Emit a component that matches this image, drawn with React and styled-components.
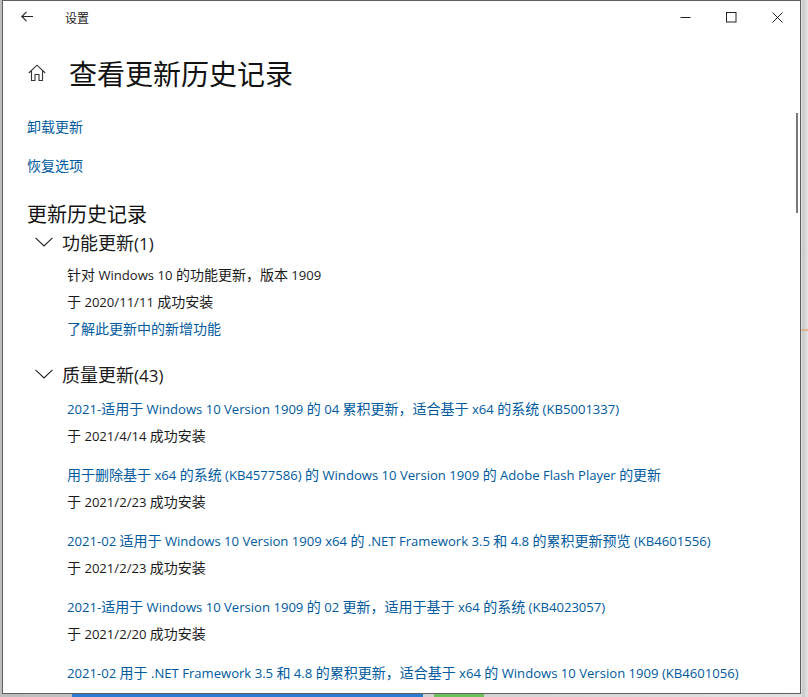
import React from 'react';
import styled, { createGlobalStyle } from 'styled-components';

const GlobalStyle = createGlobalStyle`
  html, body { margin: 0; padding: 0; height: 100%; background: #dcdcdc; overflow: hidden; }
  #root { height: 100%; }
`;

const font = `"Noto Sans CJK SC", "Noto Sans", sans-serif`;

const Desktop = styled.div`
  width: 808px;
  height: 697px;
  position: relative;
  overflow: hidden;
  background: linear-gradient(90deg, #bdbdbd 0, #e2e2e2 801px, #c9c9c9 803px, #e4e4e4 808px);
`;

const TaskStrip = styled.div`
  position: absolute;
  top: 694px;
  height: 3px;
  left: ${p => p.$left}px;
  width: ${p => p.$width}px;
  background: ${p => p.$color};
`;

const OrangeTick = styled.div`
  position: absolute;
  left: 801px;
  top: 329px;
  width: 7px;
  height: 2px;
  background: #e0b48e;
`;

const Window = styled.div`
  position: relative;
  width: 799px;
  height: 694px;
  box-sizing: border-box;
  margin-left: 2px;
  background: #fff;
  border: 1px solid #5f5f5f;
  overflow: hidden;
  font-family: ${font};
  color: #1a1a1a;
`;

const TitleBar = styled.div`
  display: flex;
  align-items: center;
  height: 32px;
  padding-left: 18px;
`;

const TitleText = styled.span`
  margin-left: 32px;
  font-size: 12px;
`;

const WindowControls = styled.div`
  display: flex;
  margin-left: auto;
`;

const ControlButton = styled.div`
  width: 46px;
  height: 32px;
  display: flex;
  align-items: center;
  justify-content: center;
`;

const Content = styled.div`
  padding: 0 0 0 24px;
`;

const PageHeader = styled.div`
  display: flex;
  align-items: center;
  height: 47px;
  margin-top: 16px;
`;

const HomeIcon = styled.div`
  display: flex;
  margin-left: 1px;
  width: 19px;
`;

const PageTitle = styled.h1`
  margin: 0 0 0 22px;
  font-size: 28px;
  font-weight: 400;
  color: #111;
`;

const TopLink = styled.a`
  display: block;
  color: #005a9e;
  font-size: 14px;
  line-height: 20px;
  margin-top: ${p => p.$top}px;
`;

const SectionTitle = styled.h2`
  margin: 25px 0 0;
  font-size: 20px;
  line-height: 28px;
  font-weight: 400;
  color: #111;
`;

const GroupHeader = styled.div`
  display: flex;
  align-items: center;
  height: 28px;
  margin-top: ${p => p.$top}px;
  padding-left: 8px;
`;

const GroupTitle = styled.span`
  margin-left: 9px;
  font-size: 18px;
  color: #1a1a1a;
`;

const GroupCount = styled.span`
  font-family: "Open Sans", sans-serif;
  font-size: 17px;
  line-height: 1;
`;

const Items = styled.div`
  padding-left: 40px;
`;

const Line = styled.div`
  font-size: 14px;
  line-height: 20px;
  height: 20px;
  white-space: nowrap;
  margin-top: ${p => p.$top || 0}px;
  color: ${p => (p.$link ? '#005a9e' : '#1a1a1a')};
`;

const Latin = styled.span`
  font-family: "Open Sans", sans-serif;
  font-size: 13.1px;
  line-height: 1;
`;

const ScrollThumb = styled.div`
  position: absolute;
  right: 2px;
  top: 112px;
  height: 100px;
  width: 2px;
  background: #7a7a7a;
`;

const Chevron = () => (
  <svg width="18" height="10" viewBox="0 0 18 10" fill="none" stroke="#222" strokeWidth="1.1">
    <path d="M0.5 0.8 L9 9 L17.5 0.8" />
  </svg>
);

// latin runs are set smaller than the chinese ones, like the system font does
const Mixed = ({ text }) =>
  text.split(/([\u3000-\u9fff\uff00-\uffef]+)/).map((part, i) =>
    i % 2 ? part : part && <Latin key={i}>{part}</Latin>
  );

const quality = [
  ['2021-适用于 Windows 10 Version 1909 的 04 累积更新，适合基于 x64 的系统 (KB5001337)', '于 2021/4/14 成功安装'],
  ['用于删除基于 x64 的系统 (KB4577586) 的 Windows 10 Version 1909 的 Adobe Flash Player 的更新', '于 2021/2/23 成功安装'],
  ['2021-02 适用于 Windows 10 Version 1909 x64 的 .NET Framework 3.5 和 4.8 的累积更新预览 (KB4601556)', '于 2021/2/23 成功安装'],
  ['2021-适用于 Windows 10 Version 1909 的 02 更新，适用于基于 x64 的系统 (KB4023057)', '于 2021/2/20 成功安装'],
  ['2021-02 用于 .NET Framework 3.5 和 4.8 的累积更新，适合基于 x64 的 Windows 10 Version 1909 (KB4601056)'],
];

export default function App() {
  return (
    <Desktop>
      <GlobalStyle />
      <Window>
        <TitleBar>
          <svg width="12" height="12" viewBox="0 0 12 12" fill="none" stroke="#222" strokeWidth="1.1">
            <path d="M5.5 0.8 L0.8 5.5 L5.5 10.2 M0.8 5.5 H12" />
          </svg>
          <TitleText>设置</TitleText>
          <WindowControls>
            <ControlButton>
              <svg width="11" height="11" viewBox="0 0 11 11" stroke="#222" strokeWidth="1"><path d="M0.5 5.5 H10.5" /></svg>
            </ControlButton>
            <ControlButton>
              <svg width="11" height="11" viewBox="0 0 11 11" fill="none" stroke="#222" strokeWidth="1"><rect x="0.5" y="0.5" width="9.5" height="9.5" /></svg>
            </ControlButton>
            <ControlButton>
              <svg width="11" height="11" viewBox="0 0 11 11" stroke="#222" strokeWidth="1"><path d="M0.5 0.5 L10.5 10.5 M10.5 0.5 L0.5 10.5" /></svg>
            </ControlButton>
          </WindowControls>
        </TitleBar>
        <Content>
          <PageHeader>
            <HomeIcon>
              <svg width="18" height="18" viewBox="0 0 18 18" fill="none" stroke="#333" strokeWidth="1.1">
                <path d="M0.8 9 L9 1.2 L17.2 9 M3.5 7 V16.5 H7 V10.5 H11 V16.5 H14.5 V7" />
              </svg>
            </HomeIcon>
            <PageTitle>查看更新历史记录</PageTitle>
          </PageHeader>
          <TopLink $top={20}>卸载更新</TopLink>
          <TopLink $top={19}>恢复选项</TopLink>
          <SectionTitle>更新历史记录</SectionTitle>
          <GroupHeader $top={0}>
            <Chevron />
            <GroupTitle>功能更新<GroupCount>(1)</GroupCount></GroupTitle>
          </GroupHeader>
          <Items>
            <Line $top={8}><Mixed text="针对 Windows 10 的功能更新，版本 1909" /></Line>
            <Line $top={7}><Mixed text="于 2020/11/11 成功安装" /></Line>
            <Line $link $top={7}>了解此更新中的新增功能</Line>
          </Items>
          <GroupHeader $top={22}>
            <Chevron />
            <GroupTitle>质量更新<GroupCount>(43)</GroupCount></GroupTitle>
          </GroupHeader>
          <Items>
            {quality.map(([title, status], i) => (
              <React.Fragment key={title}>
                <Line $link $top={i === 0 ? 10 : 19}><Mixed text={title} /></Line>
                {status && <Line $top={7}><Mixed text={status} /></Line>}
              </React.Fragment>
            ))}
          </Items>
        </Content>
        <ScrollThumb />
      </Window>
      <OrangeTick />
      <TaskStrip $left={72} $width={351} $color="#2b7cd3" />
      <TaskStrip $left={434} $width={50} $color="#6cbf5a" />
    </Desktop>
  );
}
